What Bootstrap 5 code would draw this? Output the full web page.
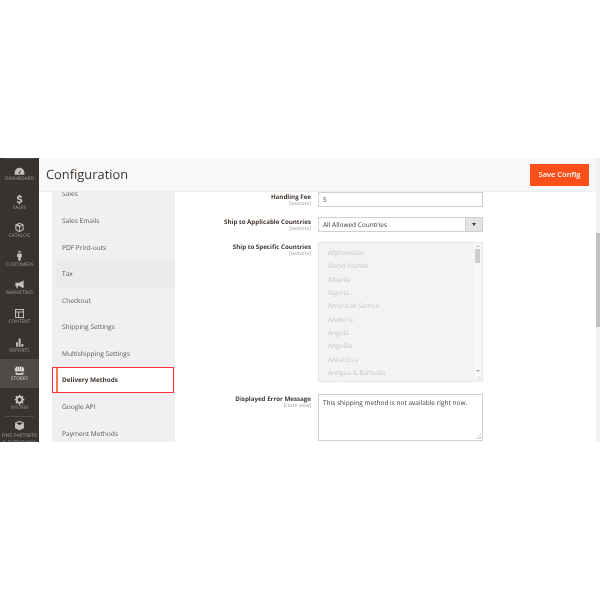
<!DOCTYPE html>
<html lang="en"><head><meta charset="utf-8"><title>Configuration</title>
<link href="https://cdn.jsdelivr.net/npm/bootstrap@5.3.0/dist/css/bootstrap.min.css" rel="stylesheet">
<style>
html,body{height:600px;overflow:hidden;background:#fff}
body{font-family:"Open Sans",sans-serif;padding-top:158px;color:#41362f;text-rendering:geometricPrecision}
.frame{height:284px;overflow:hidden;will-change:transform}
.sidenav{width:39px;background:#373330;position:relative;overflow:hidden;flex:none}
.sideitem{height:28.6px;color:#a09c97;font-size:4.8px;line-height:6px;text-transform:uppercase;white-space:nowrap;padding-top:6px}
.sideitem svg{display:block;width:11px;height:11px;margin:0 auto;fill:#c2bfbb}
.sideitem.cur{background:#4f4a46;color:#d5d2ce}
.sideitem.cur svg{fill:#e6e6e6}
.sideitem.lastitem{padding-top:3px;height:30px}
.sideitem.lastitem svg{margin-bottom:2px}
.sideitem.lastitem{line-height:7px}
.siderule{height:1px;background:#4f4b47;margin:0 5px}
.toprule{height:1px;background:#4a4642;margin:0 5px}
.headbar{height:34px;background:#f8f8f8;border-bottom:1px solid #eee;padding:0 7px;flex:none}
.pagetitle{font-size:12.9px;font-weight:400;margin:0;color:#41362f}
.savebtn{width:59px;height:22px;background:#fb5019;color:#fff;font-size:7.5px;font-weight:600;border-radius:0;border:0;padding:0}
.mainpane{min-width:0}
.contentrow{min-height:0;overflow:hidden}
.tabspanel{width:123px;margin-left:13px;background:#f0f0f0;flex:none;height:250px;overflow:hidden}
.tabslist{margin-top:-11px}
.tabrow{height:26.6px;flex:none;padding-left:10px;font-size:6.6px;color:#565656;position:relative}
.tabrow.hov{background:#ebebeb;margin-left:4px;padding-left:6px}
.tabrow.act{height:26px;margin-bottom:.6px;background:#fff;color:#41362f;font-weight:700;font-size:6.4px;border:1px solid #ff3038;margin-right:1px;padding-left:9px}
.tabrow.act::before{content:"";position:absolute;left:3px;top:0;bottom:0;width:2px;background:#f97a50}
.formpane{min-width:0}
.fieldrow{display:flex;gap:7px}
.gaprow{margin-top:10px}
.gaprowlast{margin-top:12px}
.fieldlabel{width:136px;text-align:right;font-size:6.2px;line-height:8px;padding-top:1px;font-weight:700;color:#41362f;flex:none}
.fieldscope{display:block;font-size:5.1px;line-height:6px;font-weight:400;color:#a0a0a0}
.fieldbox{width:165px;flex:none}
.textbox,.selectbox{height:15px;border:1px solid #cfcfcf;background:#fff;font-size:6.5px;line-height:13px;padding-left:4px;color:#41362f}
.selectarrow{width:17px;height:13px;background:#e3e3e3;border-left:1px solid #cfcfcf}
.selectarrow i{border:2.5px solid transparent;border-top:3px solid #41362f;border-bottom:0;display:block}
.multibox{height:140px;background:#f3f3f3;border:1px solid #e6e6e6;position:relative;padding:3px 0 0 9px;overflow:hidden}
.multiopt{height:13.35px;font-size:6.5px;line-height:13.35px;color:#c6c6c6}
.multitrack{position:absolute;top:0;right:0;bottom:0;width:8px;background:#f7f7f7}
.multithumb{position:absolute;top:6px;left:1px;width:5px;height:14px;background:#cdcdcd}
.arrowup,.arrowdown{position:absolute;left:2px;border:2px solid transparent}
.arrowup{top:2px;border-bottom:2px solid #c3c3c3;border-top:0}
.arrowdown{bottom:9px;border-top:2px solid #a3a3a3;border-bottom:0}
.areabox{height:47px;border:1px solid #cfcfcf;background:#fff;font-size:6.5px;line-height:9px;padding:3px 4px;color:#41362f;position:relative;white-space:nowrap}
.grip{position:absolute;right:1px;bottom:1px;width:5px;height:5px;background:repeating-linear-gradient(135deg,transparent 0 1px,#9a9a9a 1px 2px);clip-path:polygon(100% 0,100% 100%,0 100%)}
.gripsoft{background:repeating-linear-gradient(135deg,transparent 0 1px,#c9c9c9 1px 2px)}
.pagescroll{width:4px;flex:none;background:#f1f1f1;position:relative}
.pagethumb{position:absolute;left:0;right:0;top:75px;height:94px;background:#c1c1c1}
</style></head>
<body>
<div class="frame d-flex">
  <nav class="sidenav text-center">
    <div class="toprule"></div>
    <div class="sidelist">
      <div class="sideitem"><svg viewBox="0 -1 16 16"><path d="M8 3a7 7 0 0 0-7 7v3h14v-3a7 7 0 0 0-7-7zm2.600 2.400-1.700 4.200a1.200 1.200 0 1 1-1.300-.4z"/></svg>Dashboard</div>
      <div class="sideitem"><svg viewBox="0 0 16 16"><path d="M7 1h2v1.600c1.300.2 2.300.7 3 1.300l-1 1.800c-.8-.6-1.800-1-2.800-1-1 0-1.500.4-1.500.9 0 .6.7.9 2.200 1.400 1.900.6 3.300 1.300 3.300 3.200 0 1.600-1.100 2.700-3.200 3V15H7v-1.700c-1.300-.2-2.500-.8-3.300-1.500l1.100-1.800c.9.700 2 1.200 3.100 1.200 1 0 1.600-.4 1.600-1 0-.6-.6-.9-2.100-1.400C5.500 8.200 4.100 7.500 4.100 5.600c0-1.500 1.100-2.700 2.900-3z"/></svg>Sales</div>
      <div class="sideitem"><svg viewBox="0 0 16 16"><path d="M8 1l6 2.500v8L8 15l-6-3.500v-8zm0 1.700L5.800 3.600 10 5.500l2-.9zM3.500 5.500v5l3.800 2.200V7.200zm9 0L8.700 7.200v5.500l3.800-2.200z"/></svg>Catalog</div>
      <div class="sideitem"><svg viewBox="0 2 16 16"><circle cx="8" cy="2.500" r="2"/><path d="M5 5.500h6l.8 5-1.800.5-.3 5H6.300l-.3-5-1.800-.5z"/></svg>Customers</div>
      <div class="sideitem"><svg viewBox="0 0 16 16"><path d="M14 2v11l-1 0-5.500-3H5.500v3.500H3.500V10H2V5.500h5.500L13 2.500z"/></svg>Marketing</div>
      <div class="sideitem"><svg viewBox="0 0 16 16"><path d="M1.500 1.500h13v13h-13zm1.500 1.500v2h10V3zm0 3.500V13h3V6.500zm4.500 0V13H13V6.500z"/></svg>Content</div>
      <div class="sideitem"><svg viewBox="0 0 16 16"><path d="M3 7.500h2.800V14H3zM6.800 2h2.800v12H6.800zM10.800 10h2.800v4h-2.800z"/></svg>Reports</div>
      <div class="sideitem cur"><svg viewBox="0 0 16 16"><path d="M3 2.500h10L15 7c0 1-.7 1.500-1.500 1.500V14h-11V8.500C1.700 8.500 1 8 1 7zM3.500 9v3h9V9z"/><path d="M5 3v5M8 3v5M11 3v5" stroke="#4f4a46" stroke-width=".8"/></svg>Stores</div>
      <div class="sideitem"><svg viewBox="0 0 16 16"><path fill-rule="evenodd" d="M7 1h2l.4 1.800 1.500.6 1.600-1 1.400 1.400-1 1.600.6 1.500L15 7.300v1.900l-1.500.4-.6 1.500 1 1.600-1.400 1.400-1.600-1-1.500.6L9 15.500H7l-.4-1.800-1.500-.6-1.600 1-1.400-1.400 1-1.600-.6-1.500L1 9.200V7.300l1.500-.4.6-1.500-1-1.600 1.400-1.400 1.600 1 1.500-.6zM8 5.500a2.700 2.700 0 1 0 0 5.400 2.700 2.700 0 0 0 0-5.400z"/></svg>System</div>
      <div class="siderule"></div>
      <div class="sideitem lastitem"><svg viewBox="0 0 16 16"><path d="M8 1l6.500 3v8L8 15l-6.500-3V4zM3.500 5.200 8 7.400l4.500-2.200L8 3z"/></svg>Find Partners<br>&amp; Extensions</div>
    </div>
  </nav>
  <div class="mainpane flex-grow-1 d-flex flex-column">
    <header class="headbar d-flex align-items-center justify-content-between">
      <h1 class="pagetitle">Configuration</h1>
      <button class="btn savebtn" type="button">Save Config</button>
    </header>
    <div class="contentrow d-flex flex-grow-1">
      <div class="tabspanel">
        <div class="tabslist d-flex flex-column">
          <div class="tabrow d-flex align-items-center">Sales</div>
          <div class="tabrow d-flex align-items-center">Sales Emails</div>
          <div class="tabrow d-flex align-items-center">PDF Print-outs</div>
          <div class="tabrow hov d-flex align-items-center">Tax</div>
          <div class="tabrow d-flex align-items-center">Checkout</div>
          <div class="tabrow d-flex align-items-center">Shipping Settings</div>
          <div class="tabrow d-flex align-items-center">Multishipping Settings</div>
          <div class="tabrow act d-flex align-items-center">Delivery Methods</div>
          <div class="tabrow d-flex align-items-center">Google API</div>
          <div class="tabrow d-flex align-items-center">Payment Methods</div>
        </div>
      </div>
      <div class="formpane flex-grow-1 d-flex flex-column">
        <div class="fieldrow">
          <div class="fieldlabel">Handling Fee<span class="fieldscope">[website]</span></div>
          <div class="fieldbox textbox">5</div>
        </div>
        <div class="fieldrow gaprow">
          <div class="fieldlabel">Ship to Applicable Countries<span class="fieldscope">[website]</span></div>
          <div class="fieldbox selectbox d-flex justify-content-between align-items-center pe-0">All Allowed Countries<span class="selectarrow d-flex align-items-center justify-content-center"><i></i></span></div>
        </div>
        <div class="fieldrow gaprow">
          <div class="fieldlabel">Ship to Specific Countries<span class="fieldscope">[website]</span></div>
          <div class="fieldbox multibox">
            <div class="multiopt">Afghanistan</div>
            <div class="multiopt">Åland Islands</div>
            <div class="multiopt">Albania</div>
            <div class="multiopt">Algeria</div>
            <div class="multiopt">American Samoa</div>
            <div class="multiopt">Andorra</div>
            <div class="multiopt">Angola</div>
            <div class="multiopt">Anguilla</div>
            <div class="multiopt">Antarctica</div>
            <div class="multiopt">Antigua &amp; Barbuda</div>
            <div class="multitrack"><span class="arrowup"></span><span class="multithumb"></span><span class="arrowdown"></span></div>
            <span class="grip gripsoft"></span>
          </div>
        </div>
        <div class="fieldrow gaprowlast">
          <div class="fieldlabel">Displayed Error Message<span class="fieldscope">[store view]</span></div>
          <div class="fieldbox areabox">This shipping method is not available right now.<span class="grip"></span></div>
        </div>
      </div>
    </div>
  </div>
  <div class="pagescroll"><div class="pagethumb"></div></div>
</div>
<script src="https://cdn.jsdelivr.net/npm/bootstrap@5.3.0/dist/js/bootstrap.bundle.min.js"></script>
</body></html>
